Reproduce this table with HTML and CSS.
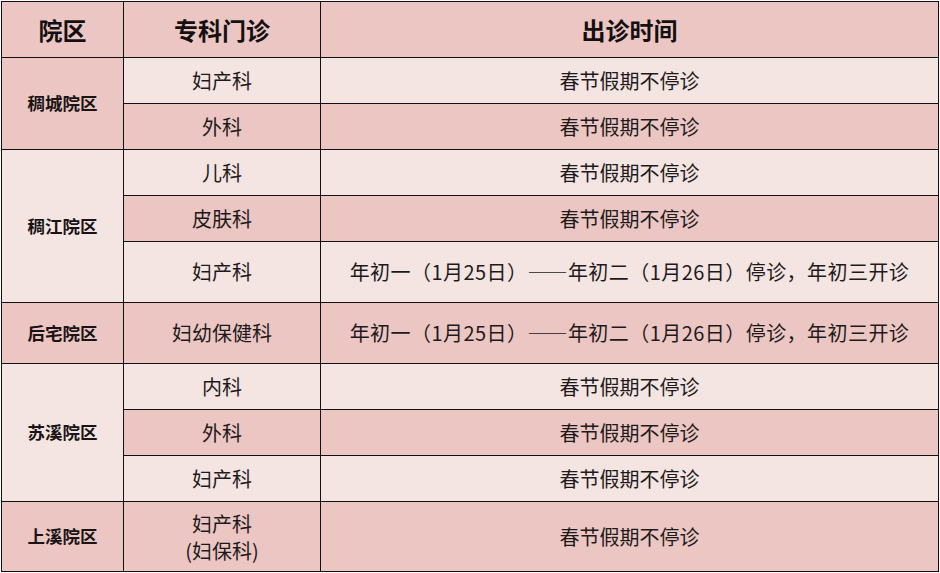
FILE: index.html
```html
<!DOCTYPE html>
<html lang="zh-CN">
<head>
<meta charset="utf-8">
<title>春节门诊安排</title>
<link rel="stylesheet" href="styles.css">
</head>
<body>
<div class="sheet">
  <div class="cell head dark">院区</div>
  <div class="cell head dark">专科门诊</div>
  <div class="cell head dark">出诊时间</div>

  <div class="cell area dark span2">稠城院区</div>
  <div class="cell light">妇产科</div>
  <div class="cell light">春节假期不停诊</div>
  <div class="cell dark">外科</div>
  <div class="cell dark">春节假期不停诊</div>

  <div class="cell area light span3">稠江院区</div>
  <div class="cell light">儿科</div>
  <div class="cell light">春节假期不停诊</div>
  <div class="cell dark">皮肤科</div>
  <div class="cell dark">春节假期不停诊</div>
  <div class="cell light">妇产科</div>
  <div class="cell light long">年初一（1月25日）——年初二（1月26日）停诊，年初三开诊</div>

  <div class="cell area dark">后宅院区</div>
  <div class="cell dark">妇幼保健科</div>
  <div class="cell dark long">年初一（1月25日）——年初二（1月26日）停诊，年初三开诊</div>

  <div class="cell area light span3">苏溪院区</div>
  <div class="cell light">内科</div>
  <div class="cell light">春节假期不停诊</div>
  <div class="cell dark">外科</div>
  <div class="cell dark">春节假期不停诊</div>
  <div class="cell light">妇产科</div>
  <div class="cell light">春节假期不停诊</div>

  <div class="cell area dark">上溪院区</div>
  <div class="cell dark two">妇产科<br>(妇保科)</div>
  <div class="cell dark">春节假期不停诊</div>
</div>
</body>
</html>
```

FILE: styles.css
```css
html, body {
  margin: 0;
  padding: 0;
  background: #ffffff;
}

body {
  width: 940px;
  height: 573px;
  overflow: hidden;
  font-family: "Noto Sans CJK SC", "Noto Sans", sans-serif;
  color: #1e1a1a;
}

.sheet {
  margin: 1px 0 0 1px;
  width: 938px;
  box-sizing: border-box;
  display: grid;
  grid-template-columns: 121px 196px 617px;
  grid-template-rows: 55px 45px 45px 45px 45px 60px 60px 45px 45px 45px 69px;
  gap: 1px;
  padding: 1px;
  background: #111111;
}

.cell {
  display: flex;
  align-items: center;
  justify-content: center;
  text-align: center;
  font-size: 20px;
  line-height: 1.3;
}

.dark {
  background: #ebc6c3;
}

.light {
  background: #f4e4e2;
}

.head {
  font-size: 24px;
  font-weight: 700;
  color: #141010;
}

.area {
  font-size: 17.5px;
  font-weight: 700;
  color: #1a1414;
}

.long {
  letter-spacing: 0.45px;
}

.span2 {
  grid-row: span 2;
}

.span3 {
  grid-row: span 3;
}

.two {
  line-height: 1.35;
}
```
